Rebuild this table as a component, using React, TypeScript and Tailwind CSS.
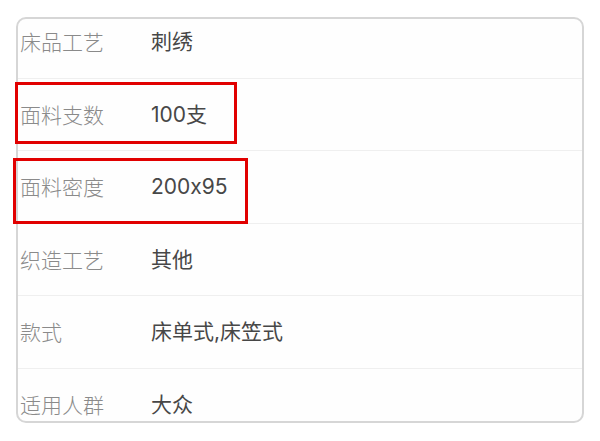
import React from 'react';

const rows = [
    { label: '床品工艺', value: '刺绣' },
    { label: '面料支数', value: '100支' },
    { label: '面料密度', value: '200x95' },
    { label: '织造工艺', value: '其他' },
    { label: '款式', value: '床单式,床笠式' },
    { label: '适用人群', value: '大众' },
];

export default function App() {
    return (
        <div
            className="relative w-[600px] h-[441px] bg-white overflow-hidden"
            style={{ fontFamily: '"Noto Sans CJK SC", "Noto Sans", sans-serif' }}
        >
            <div className="pt-[17px] pl-[16px]">
                <div className="w-[568px] h-[406px] rounded-[10px] border-2 border-[#d6d6d6] overflow-hidden bg-[#fefefe]">
                    <div className="-mt-[13px]">
                        {rows.map((r, i) => (
                            <div
                                key={r.label}
                                className={
                                    'flex items-center h-[72.5px] pl-[2px] ' +
                                    (i < rows.length - 1 ? 'border-b border-[#efefef]' : '')
                                }
                            >
                                <span className="w-[131px] text-[21px] font-light text-[#8a8a8a]">{r.label}</span>
                                <span className="text-[21px] text-[#474747] font-['Inter','Noto_Sans_CJK_SC',sans-serif] [font-feature-settings:'calt'_0]">
                                    {r.value}
                                </span>
                            </div>
                        ))}
                    </div>
                </div>
            </div>

            {/* annotations */}
            <div className="absolute left-[15px] top-[82px] w-[222px] h-[62px] border-[3px] border-[#e10000]" />
            <div className="absolute left-[13px] top-[158px] w-[235px] h-[66px] border-[3px] border-[#e10000]" />
        </div>
    );
}
